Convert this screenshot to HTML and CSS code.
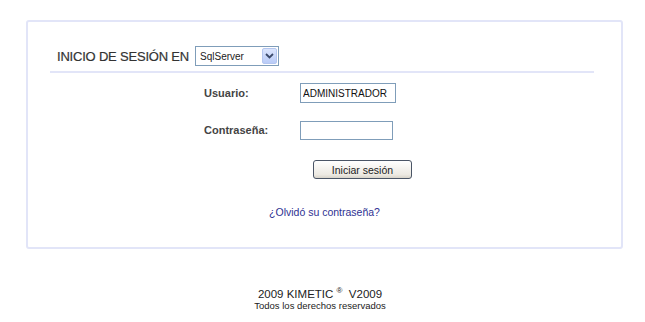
FILE: index.html
```html
<!DOCTYPE html>
<html lang="es">
<head>
  <meta charset="UTF-8" />
  <title>Inicio de sesión</title>
  <link rel="stylesheet" href="styles.css">
</head>
<body>
  <div class="login-box">
    <div class="login-header">
      <span class="login-title">INICIO DE SESIÓN EN</span>
      <div class="fake-select">
        <span class="fake-select-value">SqlServer</span>
        <span class="fake-select-btn">
          <svg width="9" height="6" viewBox="0 0 9 6"><path d="M1 1 L4.5 4.5 L8 1" fill="none" stroke="#3b4a6b" stroke-width="1.8"/></svg>
        </span>
      </div>
    </div>

    <form class="login-form">
      <label class="field-label" for="usuario">Usuario:</label>
      <input class="field-input" id="usuario" type="text" value="ADMINISTRADOR">

      <label class="field-label" for="clave">Contraseña:</label>
      <input class="field-input short" id="clave" type="password">

      <div class="form-actions">
        <button type="button" class="login-btn">Iniciar sesión</button>
      </div>
    </form>

    <a href="#" class="forgot-link">¿Olvidó su contraseña?</a>
  </div>

  <footer class="page-footer">
    <div class="footer-main">2009 KIMETIC <sup>®</sup>&nbsp; V2009</div>
    <div class="footer-sub">Todos los derechos reservados</div>
  </footer>
</body>
</html>
```

FILE: styles.css
```css
html, body {
  margin: 0;
  padding: 0;
  background: white;
  font-family: "Liberation Sans", Arial, sans-serif;
  color: #333;
}

.login-box {
  box-sizing: border-box;
  width: 597px;
  height: 229px;
  margin: 20px 0 0 26px;
  border: 2px solid #e2e5f8;
  border-radius: 3px;
  padding-top: 24px;
}

/* header row with title and database select */
.login-header {
  display: flex;
  align-items: center;
  gap: 6px;
  margin: 0 27px 0 22px;
  padding: 0 0 5px 7px;
  border-bottom: 2px solid #e2e5f8;
}
.login-title {
  font-size: 13px;
  color: #333;
  letter-spacing: -0.2px;
  -webkit-text-stroke: 0.2px #333;
}

.fake-select {
  box-sizing: border-box;
  display: flex;
  align-items: center;
  width: 84px;
  height: 20px;
  border: 1px solid #7f9db9;
  background: white;
  padding: 1px;
}
.fake-select-value {
  flex: 1;
  font-size: 10px;
  padding-left: 3px;
  color: #222;
}
.fake-select-btn {
  box-sizing: border-box;
  width: 15px;
  height: 16px;
  display: flex;
  align-items: center;
  justify-content: center;
  background: linear-gradient(#dbe5fd, #b9cbf7);
  border: 1px solid #b4c6ef;
  border-radius: 2px;
}

/* form rows */
.login-form {
  display: grid;
  grid-template-columns: 96px 100px;
  grid-auto-rows: 20px;
  row-gap: 17px;
  align-items: center;
  margin: 10px 0 0 176px;
}
.field-label {
  font-size: 11px;
  font-weight: bold;
  color: #444;
}
.field-input {
  box-sizing: border-box;
  width: 96px;
  height: 20px;
  border: 1px solid #7f9db9;
  font-family: inherit;
  font-size: 10px;
  color: #111;
  padding: 0 2px;
  margin: 0;
}
.field-input.short {
  width: 93px;
  height: 19px;
}

.form-actions {
  grid-column: 2;
  padding-left: 13px;
}
.login-btn {
  box-sizing: border-box;
  width: 99px;
  height: 19px;
  border: 1px solid #4a5566;
  border-radius: 3px;
  background: linear-gradient(#ffffff, #ece9e2 80%, #d8d4ca);
  font-family: inherit;
  font-size: 10.5px;
  color: #222;
  padding: 0;
  margin-top: 5px;
}

.forgot-link {
  display: block;
  text-align: center;
  margin-top: 29px;
  font-size: 10.5px;
  color: #2e3192;
  text-decoration: none;
}

.page-footer {
  text-align: center;
  margin-top: 36px;
  padding-right: 5px;
  color: #222;
}
.footer-main {
  font-size: 11.5px;
  line-height: 12px;
}
.footer-main sup {
  font-size: 8px;
}
.footer-sub {
  font-size: 9.5px;
  line-height: 11px;
}
```
